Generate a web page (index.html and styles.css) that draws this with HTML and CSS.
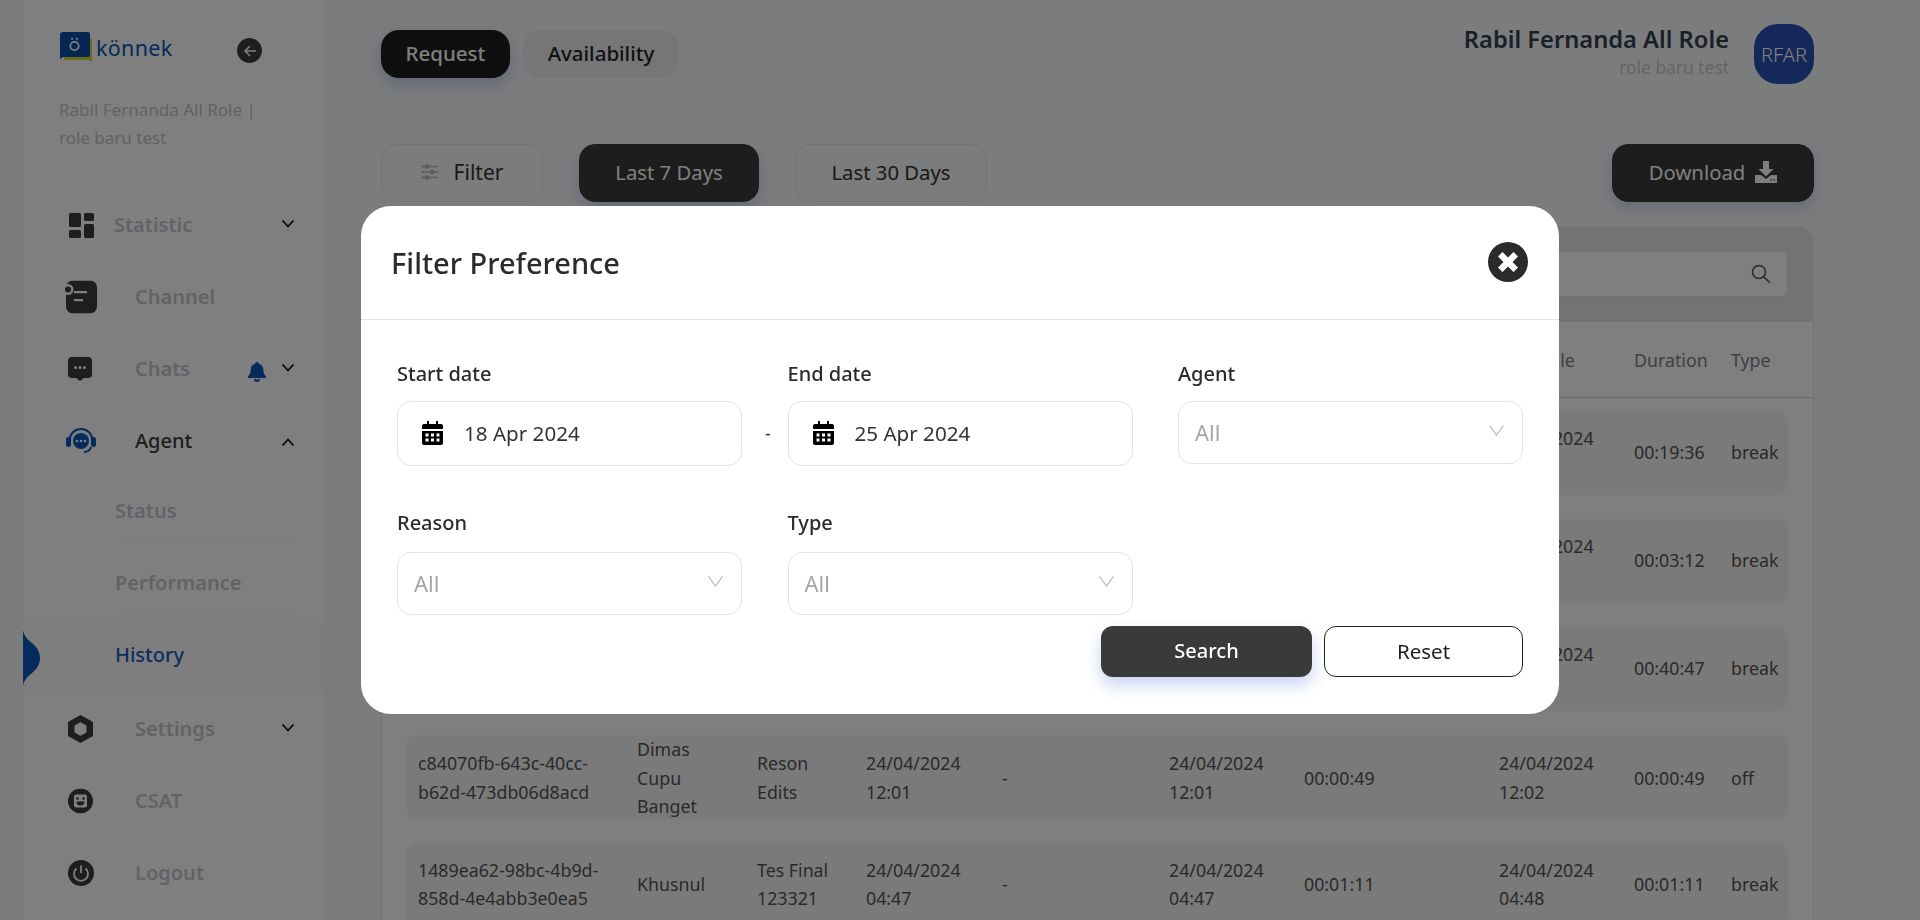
FILE: index.html
```html
<!DOCTYPE html>
<html lang="en">
<head>
<meta charset="utf-8">
<title>History</title>
<link rel="stylesheet" href="styles.css">
</head>
<body>
<div class="app">
  <aside class="sidebar">
    <div class="brand">
      <div class="logo">
        <svg class="logo-mark" width="32" height="31" viewBox="0 0 32 31"><path d="M4 6h28v25l-3-3H4z" fill="#d8da34"/><path d="M3 0h25a2 2 0 0 1 2 2v21a2 2 0 0 1-2 2H3l-3 2V3a3 3 0 0 1 3-3z" fill="#0a4fa8"/><circle cx="14.500" cy="14" r="4.200" fill="none" stroke="#fff" stroke-width="1.800"/><circle cx="12" cy="6.800" r="1.100" fill="#fff"/><circle cx="17" cy="6.800" r="1.100" fill="#fff"/></svg>
        <span class="logo-text">könnek</span>
      </div>
      <button class="back-btn" aria-label="Collapse">
        <svg width="14" height="14" viewBox="0 0 14 14" fill="none" stroke="#fff" stroke-width="1.500"><path d="M13 7H2M7 2 2 7l5 5"/></svg>
      </button>
    </div>
    <p class="user-line">Rabil Fernanda All Role | role baru test</p>
    <nav class="menu">
      <div class="item">
        <svg class="ico-stat" width="25" height="25" viewBox="0 0 25 25" fill="#3c3c3c"><rect width="12" height="14" rx="1.500"/><rect x="15" width="10" height="8" rx="1.500"/><rect y="17" width="12" height="8" rx="1.500"/><rect x="15" y="11" width="10" height="14" rx="1.500"/></svg>
        <span class="label">Statistic</span>
        <svg class="chev" width="14" height="10" viewBox="0 0 14 10" fill="none" stroke="#111" stroke-width="1.800"><path d="m1.500 1.500 5.500 6 5.500-6"/></svg>
      </div>
      <div class="item">
        <svg class="ico ico-channel" width="32" height="33" viewBox="0 0 32 33"><rect x="1" y="0" width="31" height="33" rx="7" fill="#3c3c3c"/><circle cx="3" cy="9" r="5.500" fill="#fff"/><circle cx="3" cy="9" r="3" fill="#3c3c3c"/><path d="M9 11.700h13M9 19.700h9" stroke="#fff" stroke-width="2.200"/></svg>
        <span class="label label-in">Channel</span>
      </div>
      <div class="item">
        <svg class="ico" width="24" height="24" viewBox="0 0 24 24" fill="#3c3c3c"><path d="M4 0h16a4 4 0 0 1 4 4v13a4 4 0 0 1-4 4h-4l-4 3-4-3H4a4 4 0 0 1-4-4V4a4 4 0 0 1 4-4z"/><circle cx="7.500" cy="10.500" r="1.500" fill="#fff"/><circle cx="12" cy="10.500" r="1.500" fill="#fff"/><circle cx="16.500" cy="10.500" r="1.500" fill="#fff"/></svg>
        <span class="label label-in">Chats</span>
        <svg class="bell" width="18" height="20" viewBox="0 0 18 20" fill="#0a54b8"><path d="M9 0a2 2 0 0 1 2 1.800c3 .8 4.400 3.400 4.400 6.200 0 3.500 1.100 4.700 2.600 6.300V16H0v-1.700C1.500 12.700 2.600 11.500 2.600 8c0-2.800 1.400-5.400 4.400-6.200A2 2 0 0 1 9 0z"/><path d="M6 17a3 3 0 0 0 6 0h-1.800a1.300 1.300 0 0 1-2.400 0z"/></svg>
        <svg class="chev" width="14" height="10" viewBox="0 0 14 10" fill="none" stroke="#111" stroke-width="1.800"><path d="m1.500 1.500 5.500 6 5.500-6"/></svg>
      </div>
      <div class="item item-open">
        <svg class="ico ico-agent" width="30" height="26" viewBox="0 0 30 26" fill="#0a54b8"><path d="M4 11a11 10 0 0 1 22 0" fill="none" stroke="#0a54b8" stroke-width="2"/><rect x="0" y="9" width="5" height="10" rx="2.500"/><rect x="25" y="9" width="5" height="10" rx="2.500"/><circle cx="15" cy="13" r="8"/><path d="M25 19c-1 3.500-4 5-7 5" fill="none" stroke="#0a54b8" stroke-width="2"/><circle cx="11" cy="13" r="1.300" fill="#fff"/><circle cx="15" cy="13" r="1.300" fill="#fff"/><circle cx="19" cy="13" r="1.300" fill="#fff"/></svg>
        <span class="label label-in label-on">Agent</span>
        <svg class="chev" width="14" height="10" viewBox="0 0 14 10" fill="none" stroke="#111" stroke-width="1.800"><path d="m1.500 8.500 5.500-6 5.500 6"/></svg>
      </div>
      <div class="sub">
        <div class="sub-item"><span class="sub-label">Status</span></div>
        <div class="sub-item"><span class="sub-label">Performance</span></div>
        <div class="sub-item sub-active">
          <svg class="tab-mark" width="17" height="56" viewBox="0 0 17 56" fill="#0a54b8"><path d="M0 0c1 6 5 10 9 13 5 4 8 9 8 15s-3 11-8 15c-4 3-8 7-9 13z"/></svg>
          <span class="sub-label">History</span>
        </div>
      </div>
      <div class="item">
        <svg class="ico" width="25" height="28" viewBox="0 0 25 28"><path fill-rule="evenodd" fill="#3c3c3c" d="M12.500 0 25 7v14l-12.500 7L0 21V7zm0 7.200L6.500 10.600v6.800l6 3.400 6-3.400v-6.800z"/></svg>
        <span class="label label-in">Settings</span>
        <svg class="chev" width="14" height="10" viewBox="0 0 14 10" fill="none" stroke="#111" stroke-width="1.800"><path d="m1.500 1.500 5.500 6 5.500-6"/></svg>
      </div>
      <div class="item">
        <svg class="ico" width="25" height="25" viewBox="0 0 25 25"><circle cx="12.500" cy="12.500" r="12.500" fill="#3c3c3c"/><rect x="6" y="6" width="13" height="13" rx="2" fill="#fff"/><circle cx="9.500" cy="10" r="1.300" fill="#3c3c3c"/><circle cx="15.500" cy="10" r="1.300" fill="#3c3c3c"/><path d="M8.500 13h8a4 4 0 0 1-8 0z" fill="#3c3c3c"/></svg>
        <span class="label label-in">CSAT</span>
      </div>
      <div class="item">
        <svg class="ico" width="26" height="26" viewBox="0 0 26 26"><circle cx="13" cy="13" r="13" fill="#3c3c3c"/><path d="M8.500 8.500a7 7 0 1 0 9 0M13 5.500V13" fill="none" stroke="#fff" stroke-width="1.800"/></svg>
        <span class="label label-in">Logout</span>
      </div>
    </nav>
  </aside>

  <main class="main">
    <header class="topbar">
      <div class="tabs">
        <button class="tab tab-on">Request</button>
        <button class="tab tab-avail">Availability</button>
      </div>
      <div class="profile">
        <div class="profile-text">
          <div class="profile-name">Rabil Fernanda All Role</div>
          <div class="profile-role">role baru test</div>
        </div>
        <div class="avatar">RFAR</div>
      </div>
    </header>

    <section class="toolbar">
      <div class="toolbar-left">
        <button class="tool tool-filter">
          <svg width="17" height="16" viewBox="0 0 17 16" fill="none" stroke="#b9b9b9" stroke-width="1.500"><path d="M0 2.500h17M0 8h17M0 13.500h17"/><circle cx="6" cy="2.500" r="1.600" fill="#b9b9b9"/><circle cx="11" cy="8" r="1.600" fill="#b9b9b9"/><circle cx="6" cy="13.500" r="1.600" fill="#b9b9b9"/></svg>
          Filter
        </button>
        <button class="tool tool-on tool-week">Last 7 Days</button>
        <button class="tool tool-month">Last 30 Days</button>
      </div>
      <button class="tool tool-on tool-dl">
        Download
        <svg width="22" height="22" viewBox="0 0 22 22" fill="#fff"><path d="M8 0h6v8h4.500L11 15.500 3.500 8H8z"/><path d="M0 14h6l5 4 5-4h6v8H0z"/><circle cx="16" cy="19" r=".8" fill="#3a3a3a"/><circle cx="19" cy="19" r=".8" fill="#3a3a3a"/></svg>
      </button>
    </section>

    <section class="card">
      <div class="card-band">
        <div class="search">
          <svg width="20" height="20" viewBox="0 0 20 20" fill="none" stroke="#555" stroke-width="1.500"><circle cx="8" cy="8" r="6.500"/><path d="m12.800 12.800 6 6"/></svg>
        </div>
      </div>
      <div class="grid grid-head">
        <span class="col-sched">Schedule</span>
        <span>Duration</span>
        <span>Type</span>
      </div>
      <div class="rows">
        <div class="grid row"><span class="col-sched">24/04/2024<br>&nbsp;</span><span>00:19:36</span><span>break</span></div>
        <div class="grid row"><span class="col-sched">24/04/2024<br>&nbsp;</span><span>00:03:12</span><span>break</span></div>
        <div class="grid row"><span class="col-sched">24/04/2024<br>&nbsp;</span><span>00:40:47</span><span>break</span></div>
        <div class="grid row">
          <span>c84070fb-643c-40cc-<br>b62d-473db06d8acd</span><span>Dimas<br>Cupu<br>Banget</span><span>Reson<br>Edits</span><span>24/04/2024<br>12:01</span><span>-</span><span>24/04/2024<br>12:01</span><span>00:00:49</span><span>24/04/2024<br>12:02</span><span>00:00:49</span><span>off</span>
        </div>
        <div class="grid row">
          <span>1489ea62-98bc-4b9d-<br>858d-4e4abb3e0ea5</span><span>Khusnul</span><span>Tes Final<br>123321</span><span>24/04/2024<br>04:47</span><span>-</span><span>24/04/2024<br>04:47</span><span>00:01:11</span><span>24/04/2024<br>04:48</span><span>00:01:11</span><span>break</span>
        </div>
      </div>
    </section>
  </main>
</div>

<div class="overlay">
  <div class="modal">
    <div class="modal-head">
      <h2 class="modal-title">Filter Preference</h2>
      <button class="close" aria-label="Close">
        <svg width="22" height="22" viewBox="0 0 22 22"><path d="M1 5.500 5.500 1 11 6.500 16.500 1 21 5.500 15.500 11l5.500 5.500-4.500 4.500L11 15.500 5.500 21 1 16.500 6.500 11z" fill="#fff"/></svg>
      </button>
    </div>
    <div class="modal-body">
      <div class="fields">
        <div class="field">
          <label class="field-label">Start date</label>
          <div class="input input-date">
            <svg class="cal" width="21" height="24" viewBox="0 0 21 24"><path fill="#000" fill-rule="evenodd" d="M5 0h2v3h7V0h2v3h3a2 2 0 0 1 2 2v3H0V5a2 2 0 0 1 2-2h3zM0 10h21v12a2 2 0 0 1-2 2H2a2 2 0 0 1-2-2zm3.500 2.500v3h3v-3zm5.500 0v3h3v-3zm5.500 0v3h3v-3zm-11 5v3h3v-3zm5.500 0v3h3v-3zm5.500 0v3h3v-3z"/></svg>
            <span>18 Apr 2024</span>
          </div>
          <span class="dash">-</span>
        </div>
        <div class="field">
          <label class="field-label">End date</label>
          <div class="input input-date">
            <svg class="cal" width="21" height="24" viewBox="0 0 21 24"><path fill="#000" fill-rule="evenodd" d="M5 0h2v3h7V0h2v3h3a2 2 0 0 1 2 2v3H0V5a2 2 0 0 1 2-2h3zM0 10h21v12a2 2 0 0 1-2 2H2a2 2 0 0 1-2-2zm3.500 2.500v3h3v-3zm5.500 0v3h3v-3zm5.500 0v3h3v-3zm-11 5v3h3v-3zm5.500 0v3h3v-3zm5.500 0v3h3v-3z"/></svg>
            <span>25 Apr 2024</span>
          </div>
        </div>
        <div class="field">
          <label class="field-label">Agent</label>
          <div class="input input-select"><span>All</span><svg width="15" height="11" viewBox="0 0 15 11" fill="none" stroke="#b5b5b5" stroke-width="1.200"><path d="m.5.500 7 9.500 7-9.500"/></svg></div>
        </div>
        <div class="field field-low">
          <label class="field-label">Reason</label>
          <div class="input input-select"><span>All</span><svg width="15" height="11" viewBox="0 0 15 11" fill="none" stroke="#b5b5b5" stroke-width="1.200"><path d="m.5.500 7 9.500 7-9.500"/></svg></div>
        </div>
        <div class="field field-low">
          <label class="field-label">Type</label>
          <div class="input input-select"><span>All</span><svg width="15" height="11" viewBox="0 0 15 11" fill="none" stroke="#b5b5b5" stroke-width="1.200"><path d="m.5.500 7 9.500 7-9.500"/></svg></div>
        </div>
      </div>
      <div class="actions">
        <button class="btn btn-search">Search</button>
        <button class="btn btn-reset">Reset</button>
      </div>
    </div>
  </div>
</div>
</body>
</html>
```

FILE: styles.css
```css
* { box-sizing: border-box; }
html, body { margin: 0; height: 100%; overflow: hidden; }
body {
  background: #f6f8fc;
  font-family: "Noto Sans", "Open Sans", sans-serif;
  color: #333;
}
button { font-family: inherit; border: 0; background: none; padding: 0; cursor: pointer; }
.app { display: flex; height: 920px; padding-left: 23px; overflow: hidden; }

/* sidebar */
.sidebar { width: 299px; background: #fff; flex: none; padding-top: 32px; overflow: hidden; }
.brand { display: flex; align-items: flex-start; padding-left: 37px; height: 31px; }
.logo { display: flex; align-items: center; gap: 4px; width: 177px; }
.logo-mark { flex: none; }
.logo-text { font-size: 21.500px; letter-spacing: .3px; color: #0a54b8; line-height: 31px; }
.back-btn { width: 25px; height: 25px; border-radius: 50%; background: #3c3c3c; display: flex; align-items: center; justify-content: center; margin-top: 6px; }
.user-line { margin: 33px 0 0; padding: 0 40px 0 36px; font-size: 17px; line-height: 28px; color: #c4c4c4; height: 56px; }
.menu { margin-top: 37px; }
.item { height: 72px; display: flex; align-items: center; position: relative; padding-left: 46px; }
.ico { position: absolute; left: 45px; top: 50%; transform: translateY(-50%); }
.ico-channel { left: 42px; }
.ico-agent { left: 43px; }
.ico-stat { margin-right: 20px; flex: none; }
.label { font-size: 20px; font-weight: 600; color: #c4c4ce; padding-bottom: 1px; }
.label-in { margin-left: 66px; }
.label-on { color: #3c3c3c; font-weight: 500; }
.chev { position: absolute; left: 258px; top: 30px; }
.bell { position: absolute; left: 225px; top: 29px; }
.item-open .chev { top: 32px; }
.sub-item { height: 72px; padding: 7px 24px 7px 92px; position: relative; }
.sub-label { display: flex; align-items: center; height: 58px; padding-bottom: 4px; border-bottom: 1px solid #f8f8f8; font-size: 20px; font-weight: 600; color: #c4c4ce; }
.sub-active { background: #fdfdfd; }
.sub-active .sub-label { color: #165ec0; font-weight: 500; }
.tab-mark { position: absolute; left: 0; top: 9px; }

/* main */
.main { flex: 1; min-width: 0; padding: 24px 106px 0 59px; }
.topbar { display: flex; justify-content: space-between; align-items: flex-start; height: 60px; }
.tabs { display: flex; gap: 13px; margin-top: 6px; }
.tab { height: 48px; padding: 0 0 2px; border-radius: 18px; background: #ecedf0; font-size: 20.500px; font-weight: 500; color: #222; }
.tab-avail { width: 156px; }
.tab-on { background: #1e1e1e; color: #fff; box-shadow: 0 6px 14px rgba(40,80,180,.25); width: 129px; }
.profile { display: flex; gap: 25px; }
.profile-text { text-align: right; }
.profile-name { font-size: 23.700px; font-weight: 600; color: #36404c; line-height: 30px; }
.profile-role { font-size: 17.400px; color: #c9c9c9; line-height: 26px; }
.avatar { width: 60px; height: 60px; border-radius: 24px; background: #2852b4; color: #fff; display: flex; align-items: center; justify-content: center; font-size: 20px; font-weight: 300; }

.toolbar { display: flex; justify-content: space-between; margin-top: 60px; }
.toolbar-left { display: flex; gap: 36px; }
.tool { height: 58px; padding: 0 0 2px; border-radius: 16px; border: 1px solid #e6e6e6; font-size: 20.300px; color: #333; display: flex; align-items: center; justify-content: center; gap: 16px; background: #f6f8fc; }
.tool-filter { width: 162px; font-size: 21px; }
.tool-week { width: 180px; }
.tool-month { width: 192px; }
.tool-on { background: #3a3a3a; border-color: #3a3a3a; color: #fff; box-shadow: 0 6px 14px rgba(40,80,180,.2); }
.tool-dl { gap: 10px; width: 202px; }

.card { margin-top: 24px; background: #fff; border: 1px solid #e8e8e8; border-bottom: 0; border-radius: 16px 16px 0 0; height: 694px; overflow: hidden; }
.card-band { height: 95px; background: #e6e6e6; padding: 24px 25px 0 0; display: flex; justify-content: flex-end; }
.search { width: 500px; height: 46px; background: #fff; border-radius: 6px; border: 1px solid #e2e2e2; display: flex; align-items: center; justify-content: flex-end; padding-right: 16px; }
.grid { display: grid; grid-template-columns: 219px 120px 109px 136px 167px 135px 195px 135px 97px 1fr; align-items: center; padding-left: 12px; font-size: 17.800px; line-height: 28.500px; color: #555; }
.grid-head { height: 76px; padding: 2px 0 0 36px; border-bottom: 1px solid #d6d6d6; color: #7e8088; }
.col-sched { grid-column: 8; }
.rows { padding: 13px 25px 0 24px; display: flex; flex-direction: column; gap: 24px; }
.row { height: 84px; background: #f4f4f4; border-radius: 12px; flex: none; padding-bottom: 2px; }

/* modal */
.overlay { position: fixed; inset: 0; background: rgba(0,0,0,.5); display: flex; justify-content: center; align-items: flex-start; padding-top: 206px; }
.modal { width: 1198px; height: 508px; background: #fff; border-radius: 30px; overflow: hidden; }
.modal-head { height: 114px; border-bottom: 1px solid #dee2e6; display: flex; align-items: center; justify-content: space-between; padding: 0 31px 0 30px; }
.modal-title { margin: 0; font-size: 29px; font-weight: 500; color: #2b2b2b; }
.close { width: 40px; height: 40px; border-radius: 50%; background: #2b2b2b; display: flex; align-items: center; justify-content: center; margin-top: -2px; }
.modal-body { padding: 39px 36px 0; }
.fields { display: grid; grid-template-columns: repeat(3, 345px); column-gap: 45.500px; }
.field { position: relative; }
.field:nth-child(-n+3) { height: 151px; }
.field-label { display: block; font-size: 20px; font-weight: 500; line-height: 29px; color: #2b2b2b; margin-bottom: 13px; }
.field-low .field-label { margin-top: -2px; margin-bottom: 15px; }
.input { border: 1px solid #e3e3e3; border-radius: 14px; background: #fff; display: flex; align-items: center; }
.input-date { height: 65px; padding: 0 0 2px 24px; gap: 21px; font-size: 20.600px; color: #333; }
.cal { flex: none; }
.input-select { height: 63px; padding: 0 18px 2px 16px; justify-content: space-between; font-size: 22px; color: #a5a5a5; }
.input-select svg { margin-top: -2px; }
.dash { position: absolute; left: 368px; top: 62px; font-size: 18px; color: #333; line-height: 24px; }
.actions { display: flex; justify-content: flex-end; gap: 12px; margin-top: 11px; }
.btn { height: 51px; padding-bottom: 2px; border-radius: 12px; font-size: 20px; font-weight: 500; }
.btn-search { width: 211px; background: #3a3a3a; color: #fff; box-shadow: 0 8px 16px rgba(60,100,210,.28); }
.btn-reset { width: 199px; background: #fff; border: 1px solid #222; color: #222; font-weight: 400; font-size: 20.500px; }
```
